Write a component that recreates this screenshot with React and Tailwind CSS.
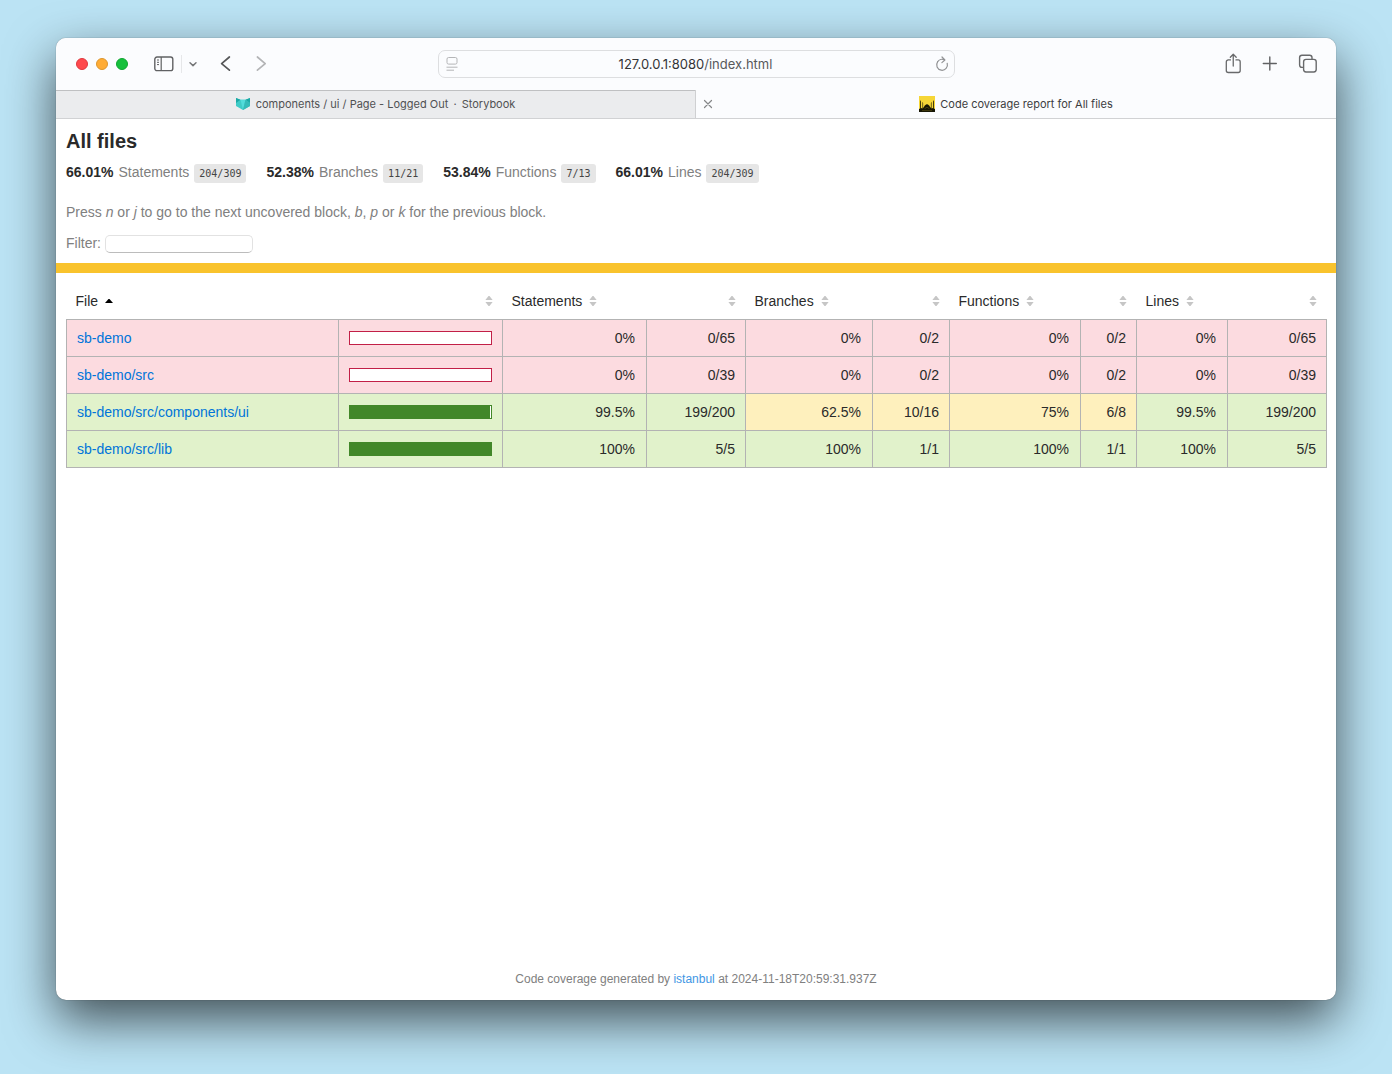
import React from "react";

const files = [
  {
    name: "sb-demo",
    percent: 0,
    cells: [
      ["low", "0%", "0/65"],
      ["low", "0%", "0/2"],
      ["low", "0%", "0/2"],
      ["low", "0%", "0/65"],
    ],
  },
  {
    name: "sb-demo/src",
    percent: 0,
    cells: [
      ["low", "0%", "0/39"],
      ["low", "0%", "0/2"],
      ["low", "0%", "0/2"],
      ["low", "0%", "0/39"],
    ],
  },
  {
    name: "sb-demo/src/components/ui",
    percent: 99,
    cells: [
      ["high", "99.5%", "199/200"],
      ["medium", "62.5%", "10/16"],
      ["medium", "75%", "6/8"],
      ["high", "99.5%", "199/200"],
    ],
  },
  {
    name: "sb-demo/src/lib",
    percent: 100,
    cells: [
      ["high", "100%", "5/5"],
      ["high", "100%", "1/1"],
      ["high", "100%", "1/1"],
      ["high", "100%", "5/5"],
    ],
  },
];

const levels = {
  low: "bg-[#fcdbe0]",
  medium: "bg-[#fef0bd]",
  high: "bg-[#e1f2cb]",
};

const totals = [
  ["66.01%", "Statements", "204/309"],
  ["52.38%", "Branches", "11/21"],
  ["53.84%", "Functions", "7/13"],
  ["66.01%", "Lines", "204/309"],
];

const headers = ["File", "", "Statements", "", "Branches", "", "Functions", "", "Lines", ""];

function Sorter({ ascending }) {
  return (
    <svg width="8" height="10" viewBox="0 0 8 10" className="shrink-0" aria-hidden="true">
      {ascending ? (
        <path d="M0 7L3.5 3h1L8 7z" fill="#000" />
      ) : (
        <path d="M.4 4L3.5 0h1L7.6 4zM.4 6L3.5 10h1L7.6 6z" fill="#c6c6c6" />
      )}
    </svg>
  );
}

function Toolbar() {
  return (
    <div className="grid h-[52px] grid-cols-[1fr_517px_1fr] items-center bg-[#fbfcfe]">
      <div className="flex items-center pl-5">
        <div className="flex gap-2">
          <button aria-label="Close window" className="size-3 rounded-full border border-[#e0383e] bg-[#fe494d]" />
          <button aria-label="Minimize window" className="size-3 rounded-full border border-[#dd962d] bg-[#ffac35]" />
          <button aria-label="Zoom window" className="size-3 rounded-full border border-[#10a631] bg-[#16c03c]" />
        </div>
        <button aria-label="Show sidebar" className="ml-[26px]">
          <svg width="20" height="16" viewBox="0 0 20 16" fill="none" stroke="#606163">
            <rect x=".8" y="1" width="18" height="13.6" rx="2.2" strokeWidth="1.4" />
            <path d="M7.2 1v13.6" strokeWidth="1.2" />
            <path d="M3 4h2M3 6.3h2M3 8.6h2" strokeWidth="1" />
          </svg>
        </button>
        <span className="ml-[7px] h-[18px] w-px bg-[#e6e7e9]" />
        <button aria-label="Sidebar options" className="ml-[6px]">
          <svg width="10" height="8" viewBox="0 0 10 8" fill="none" stroke="#77787a" strokeWidth="1.5" strokeLinecap="round" strokeLinejoin="round">
            <path d="M2 2.8L5 5.6l3-2.8" />
          </svg>
        </button>
        <button aria-label="Back" className="ml-[22px]">
          <svg width="12" height="18" viewBox="0 0 12 18" fill="none" stroke="#565759" strokeWidth="1.7" strokeLinecap="round" strokeLinejoin="round">
            <path d="M9.4 2L1.6 8.600l7.800 6.600" />
          </svg>
        </button>
        <button aria-label="Forward" className="ml-6">
          <svg width="12" height="18" viewBox="0 0 12 18" fill="none" stroke="#b3b4b6" strokeWidth="1.7" strokeLinecap="round" strokeLinejoin="round">
            <path d="M1.400 2l7.800 6.600-7.800 6.600" />
          </svg>
        </button>
      </div>
      <div className="flex h-7 items-center rounded-[7px] border border-[#dddee0] bg-[#fbfcfe] pr-1 pl-[7px]">
        <button aria-label="Page menu">
          <svg width="12" height="16" viewBox="0 0 12 16" fill="none" stroke="#b4b5b7">
            <rect x="1" y="1.5" width="10" height="6.6" rx="1.6" />
            <path d="M.5 11.2h11M.5 14.2h7.5" />
          </svg>
        </button>
        <p className="flex-1 text-center text-[13px] leading-5 text-[#58595b]">
          <span className="text-[#333436]">127.0.0.1:8080</span>/index.html
        </p>
        <button aria-label="Reload">
          <svg width="16" height="16" viewBox="0 0 16 16" fill="none" stroke="#929395" strokeWidth="1.2" strokeLinecap="round" strokeLinejoin="round">
            <path d="M3.600 5.800a5.400 5.400 0 1 0 9.600 1.500" />
            <path d="M3.600 5.800A5.300 5.300 0 0 1 10.600 4M8 1l2.900 3-3 2.600" />
          </svg>
        </button>
      </div>
      <div className="flex items-center justify-end gap-[18px] pr-[18px]">
        <button aria-label="Share">
          <svg width="18" height="22" viewBox="0 0 18 22" fill="none" stroke="#68696b" strokeWidth="1.3" strokeLinecap="round" strokeLinejoin="round">
            <path d="M5.500 6.900H3.300a2 2 0 0 0-2 2v8.600a2 2 0 0 0 2 2h9.900a2 2 0 0 0 2-2V8.900a2 2 0 0 0-2-2H11" />
            <path d="M8.250 13V1.400M5.300 4.300l2.950-3 2.950 3" />
          </svg>
        </button>
        <button aria-label="New tab">
          <svg width="18" height="18" viewBox="0 0 18 18" fill="none" stroke="#606163" strokeWidth="1.4" strokeLinecap="round">
            <path d="M8.800 2v13M2.300 8.500h13" />
          </svg>
        </button>
        <button aria-label="Show tab overview" className="ml-px">
          <svg width="20" height="20" viewBox="0 0 20 20" fill="none" stroke="#68696b" strokeWidth="1.4">
            <rect x="5.6" y="5.4" width="12.6" height="12.6" rx="2.4" />
            <path d="M5.6 13.4H4A2.400 2.400 0 0 1 1.600 11V3.600A2.400 2.400 0 0 1 4 1.200h7.600A2.400 2.400 0 0 1 14 3.600v1.800" />
          </svg>
        </button>
      </div>
    </div>
  );
}

function ComponentsIcon() {
  return (
    <svg width="14" height="12" viewBox="0 0 14 12" aria-hidden="true">
      <path d="M0 0l4.5 1.8h5L14 0v8l-7 4-7-4z" fill="#3fcbc7" />
      <path d="M0 0l4.5 1.8L0 5zM14 0L9.5 1.8 14 5z" fill="#1ba8a5" />
      <path d="M4.5 1.8h5L7 12z" fill="#52dcda" />
      <path d="M9.5 1.8L14 5v3l-7 4z" fill="#35bab8" />
    </svg>
  );
}

function MosqueIcon() {
  return (
    <svg width="16" height="16" viewBox="0 0 16 16" aria-hidden="true">
      <path d="M0 0h16v16H0z" fill="#f6d637" />
      <path
        d="M0 16v-3l1.200-.6V5.500l.4-1.500.4 1.500V12l1.500.6V7l.3-1.200.3 1.200v5l1-1.200C5.600 9.300 6.600 8.600 8 8.200c1.400.4 2.400 1.100 2.900 2.600l1 1.200V7l.3-1.200.3 1.200v5.600L14 12V5.500l.4-1.500.4 1.500v6.900l1.200.6v3z"
        fill="#161504"
      />
      <path d="M5.800 13a2.300 2.300 0 0 1 4.400 0M3 14.600h10" stroke="#6d6018" strokeWidth=".5" fill="none" />
    </svg>
  );
}

function TabBar() {
  return (
    <div className="grid h-[29px] grid-cols-2 border-b border-[#d1d2d4] bg-[#fbfcfe] text-[11px] leading-4">
      <a
        href="#storybook"
        className="flex items-center justify-center gap-1.5 border-r border-[#cfd0d2] bg-[#ebecee] text-[#505153] shadow-[inset_0_1px_0_#bfc0c2]"
      >
        <ComponentsIcon />
        <span>
          components / ui / Page - Logged Out <span className="mx-0.5">·</span> Storybook
        </span>
      </a>
      <div className="relative flex items-center justify-center">
        <button aria-label="Close tab" className="absolute left-[7px]">
          <svg width="10" height="10" viewBox="0 0 10 10" stroke="#858688" strokeWidth="1.2" strokeLinecap="round">
            <path d="M1.500 1.500l7 7M8.500 1.500l-7 7" />
          </svg>
        </button>
        <a href="#coverage" className="flex items-center gap-[5px] text-[#3c3d3f]">
          <MosqueIcon />
          Code coverage report for All files
        </a>
      </div>
    </div>
  );
}

function Summary() {
  return (
    <header className="p-2.5">
      <h1 className="text-xl leading-6 font-bold">All files</h1>
      <div className="mt-[9px] flex flex-wrap gap-x-5">
        {totals.map(([percent, label, fraction]) => (
          <div key={label} className="flex gap-[5px]">
            <strong>{percent}</strong>
            <span className="text-[#808080]">{label}</span>
            <span className="mt-0.5 h-[19px] rounded-[3px] bg-[#e6e6e6] px-[5px] font-['DejaVu_Sans_Mono',monospace] text-[10px] leading-[19px] text-[#444]">
              {fraction}
            </span>
          </div>
        ))}
      </div>
      <p className="mt-[19px] text-[#808080]">
        Press <em>n</em> or <em>j</em> to go to the next uncovered block, <em>b</em>, <em>p</em> or <em>k</em> for the
        previous block.
      </p>
      <div className="mt-[11px] flex items-center gap-1 text-[#808080]">
        <label htmlFor="filter">Filter:</label>
        <input
          id="filter"
          type="search"
          className="mt-px h-[18px] w-[148px] rounded-[5px] border border-[#e2e2e2] border-b-[#bcbcbc] bg-white px-1 text-xs outline-none"
        />
      </div>
    </header>
  );
}

function CoverageTable() {
  return (
    <table className="w-full table-fixed border-collapse">
      <colgroup>
        <col className="w-[272px]" />
        <col className="w-[164px]" />
        <col className="w-[144px]" />
        <col className="w-[99px]" />
        <col className="w-[127px]" />
        <col className="w-[77px]" />
        <col className="w-[131px]" />
        <col className="w-[56px]" />
        <col className="w-[91px]" />
        <col className="w-[99px]" />
      </colgroup>
      <thead>
        <tr>
          {headers.map((label, index) => (
            <th key={index} scope="col" className="h-9 py-0 pr-2.5 pl-[9px] text-left font-normal">
              <button
                aria-label={label ? undefined : "Sort by " + (index === 1 ? "coverage" : headers[index - 1] + " count")}
                className={label ? "flex items-center gap-[7px]" : "ml-auto flex"}
              >
                {label}
                <Sorter ascending={index === 0} />
              </button>
            </th>
          ))}
        </tr>
      </thead>
      <tbody>
        {files.map(({ name, percent, cells }) => {
          const tone = levels[cells[0][0]];
          return (
            <tr key={name} className="h-[37px]">
              <td className={"border border-[#b3b3b3] px-2.5 " + tone}>
                <a href={"#" + name} className="text-[#0074d9]">
                  {name}
                </a>
              </td>
              <td className={"border border-[#b3b3b3] px-2.5 " + tone}>
                <div
                  role="img"
                  aria-label={percent + "% covered"}
                  className={
                    "h-[14px] border bg-white " + (percent === 0 ? "border-[#c21f47]" : "border-[#428729]")
                  }
                >
                  <div className="h-full bg-[#428729]" style={{ width: percent + "%" }} />
                </div>
              </td>
              {cells.map(([level, value, fraction], index) => (
                <React.Fragment key={index}>
                  <td className={"border border-[#b3b3b3] pr-[11px] pl-2.5 text-right " + levels[level]}>{value}</td>
                  <td className={"border border-[#b3b3b3] px-2.5 text-right " + levels[level]}>{fraction}</td>
                </React.Fragment>
              ))}
            </tr>
          );
        })}
      </tbody>
    </table>
  );
}

export default function App() {
  return (
    <div className="flex min-h-screen flex-col bg-[#bbe3f4] px-14 pt-[38px] pb-[74px] font-['Inter',sans-serif]">
      <div className="flex flex-1 flex-col overflow-hidden rounded-[10px] bg-white shadow-[0_0_1px_rgba(0,0,0,0.6),0_20px_50px_rgba(0,0,0,0.65)]">
        <Toolbar />
        <TabBar />
        <main className="flex flex-1 flex-col font-['Liberation_Sans',Arial,sans-serif] text-sm leading-5 text-[#2a2a2a]">
          <Summary />
          <div className="h-2.5 bg-[#f9c32d]" />
          <div className="flex-1 py-2.5 pr-[9px] pl-2.5">
            <CoverageTable />
          </div>
          <footer className="py-3 text-center text-xs leading-[18px] text-[#808080]">
            Code coverage generated by{" "}
            <a href="#istanbul" className="text-[#4196e4]">
              istanbul
            </a>{" "}
            at 2024-11-18T20:59:31.937Z
          </footer>
        </main>
      </div>
    </div>
  );
}
